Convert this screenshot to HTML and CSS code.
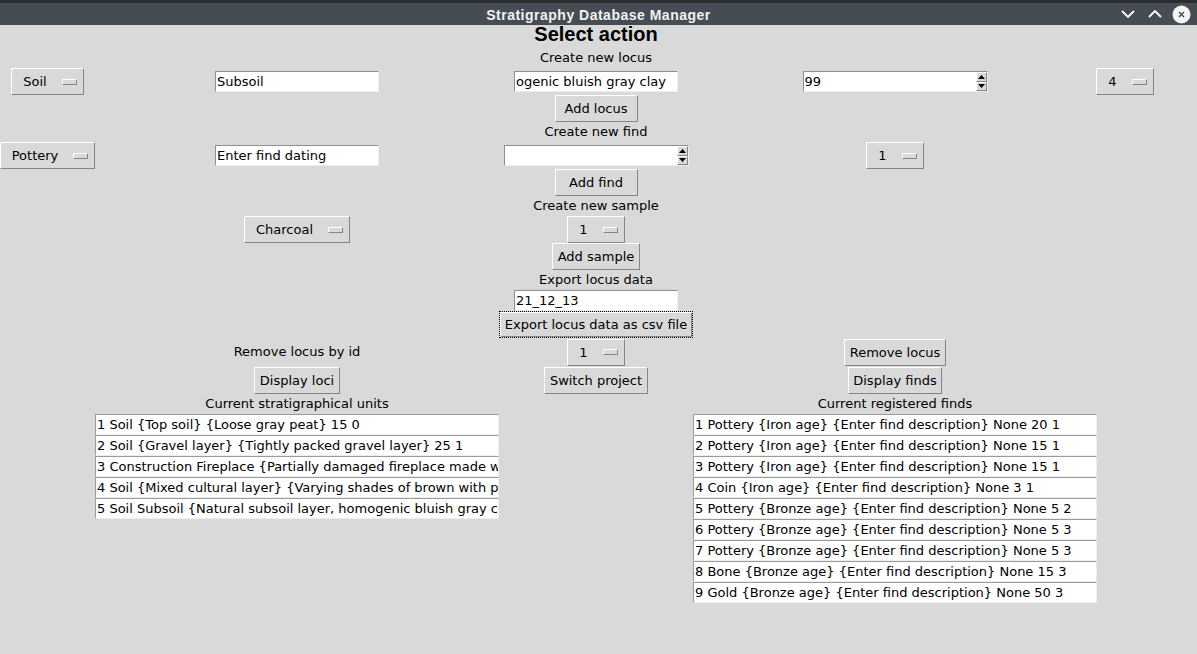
FILE: index.html
```html
<!DOCTYPE html>
<html lang="en">
<head>
<meta charset="utf-8">
<title>Stratigraphy Database Manager</title>
<link rel="stylesheet" href="styles.css">
</head>
<body>
<div class="window">
  <header class="titlebar">
    <span class="tb-side"></span>
    <span class="title">Stratigraphy Database Manager</span>
    <div class="controls">
      <span class="ctl"><svg width="14" height="8" viewBox="0 0 14 8"><path d="M1 1 L7 7 L13 1" fill="none" stroke="#ffffff" stroke-width="1.8"/></svg></span>
      <span class="ctl"><svg width="14" height="8" viewBox="0 0 14 8"><path d="M1 7 L7 1 L13 7" fill="none" stroke="#ffffff" stroke-width="1.8"/></svg></span>
      <span class="ctl"><svg width="19" height="19" viewBox="0 0 19 19"><circle cx="9.5" cy="9.5" r="9" fill="#f4f4f4"/><path d="M7 7 L12 12 M12 7 L7 12" stroke="#3c3f44" stroke-width="1.2"/></svg></span>
    </div>
  </header>

  <main class="app">
    <div class="heading r0 c2">Select action</div>

    <div class="label r1 c2">Create new locus</div>
    <div class="opt r2 c0">Soil<i class="ind"></i></div>
    <div class="entry r2 c1">Subsoil</div>
    <div class="entry r2 c2">ogenic bluish gray clay</div>
    <div class="spin r2 c3">
      <span class="spin-val">99</span>
      <span class="arrows">
        <span class="arrow"><svg width="7" height="4" viewBox="0 0 7 4"><polygon points="0,4 7,4 3.5,0" fill="#000"/></svg></span>
        <span class="arrow"><svg width="7" height="4" viewBox="0 0 7 4"><polygon points="0,0 7,0 3.5,4" fill="#000"/></svg></span>
      </span>
    </div>
    <div class="opt r2 c4">4<i class="ind"></i></div>
    <div class="btn btn-fixed r3 c2">Add locus</div>

    <div class="label r4 c2">Create new find</div>
    <div class="opt r5 c0">Pottery<i class="ind"></i></div>
    <div class="entry r5 c1">Enter find dating</div>
    <div class="spin r5 c2">
      <span class="spin-val"></span>
      <span class="arrows">
        <span class="arrow"><svg width="7" height="4" viewBox="0 0 7 4"><polygon points="0,4 7,4 3.5,0" fill="#000"/></svg></span>
        <span class="arrow"><svg width="7" height="4" viewBox="0 0 7 4"><polygon points="0,0 7,0 3.5,4" fill="#000"/></svg></span>
      </span>
    </div>
    <div class="opt r5 c3">1<i class="ind"></i></div>
    <div class="btn btn-fixed r6 c2">Add find</div>

    <div class="label r7 c2">Create new sample</div>
    <div class="opt r8 c1">Charcoal<i class="ind"></i></div>
    <div class="opt r8 c2">1<i class="ind"></i></div>
    <div class="btn r9 c2">Add sample</div>

    <div class="label r10 c2">Export locus data</div>
    <div class="entry r11 c2">21_12_13</div>
    <div class="btn btn-focus r12 c2">Export locus data as csv file</div>

    <div class="label r13 c1">Remove locus by id</div>
    <div class="opt r13 c2">1<i class="ind"></i></div>
    <div class="btn r13 c3">Remove locus</div>

    <div class="btn r14 c1">Display loci</div>
    <div class="btn r14 c2">Switch project</div>
    <div class="btn r14 c3">Display finds</div>

    <div class="label r15 c1">Current stratigraphical units</div>
    <div class="label r15 c3">Current registered finds</div>

    <div class="list r16 c1">
      <div class="list-row">1 Soil {Top soil} {Loose gray peat} 15 0</div>
      <div class="list-row">2 Soil {Gravel layer} {Tightly packed gravel layer} 25 1</div>
      <div class="list-row">3 Construction Fireplace {Partially damaged fireplace made w</div>
      <div class="list-row">4 Soil {Mixed cultural layer} {Varying shades of brown with p</div>
      <div class="list-row">5 Soil Subsoil {Natural subsoil layer, homogenic bluish gray c</div>
    </div>

    <div class="list r16 c3">
      <div class="list-row">1 Pottery {Iron age} {Enter find description} None 20 1</div>
      <div class="list-row">2 Pottery {Iron age} {Enter find description} None 15 1</div>
      <div class="list-row">3 Pottery {Iron age} {Enter find description} None 15 1</div>
      <div class="list-row">4 Coin {Iron age} {Enter find description} None 3 1</div>
      <div class="list-row">5 Pottery {Bronze age} {Enter find description} None 5 2</div>
      <div class="list-row">6 Pottery {Bronze age} {Enter find description} None 5 3</div>
      <div class="list-row">7 Pottery {Bronze age} {Enter find description} None 5 3</div>
      <div class="list-row">8 Bone {Bronze age} {Enter find description} None 15 3</div>
      <div class="list-row">9 Gold {Bronze age} {Enter find description} None 50 3</div>
    </div>
  </main>
</div>
</body>
</html>
```

FILE: styles.css
```css
* { box-sizing: border-box; }

body {
  margin: 0;
  background: #d9d9d9;
  font-family: "DejaVu Sans", sans-serif;
  font-size: 13px;
  color: #000;
}

.window {
  width: 1197px;
  height: 654px;
  overflow: hidden;
  background: #d9d9d9;
}

/* ---------- title bar ---------- */
.titlebar {
  height: 25px;
  border-top: 3px solid #2b2c2e;
  background: #454c54;
  display: grid;
  grid-template-columns: 1fr auto 1fr;
  align-items: center;
}

.title {
  font-family: "Liberation Sans", Arial, sans-serif;
  font-weight: bold;
  font-size: 14px;
  letter-spacing: 0.5px;
  color: #f2f2f2;
  padding-top: 1px;
}

.controls {
  justify-self: end;
  display: flex;
  align-items: center;
  height: 100%;
  padding-right: 2px;
}

.ctl {
  width: 27px;
  height: 22px;
  display: flex;
  align-items: center;
  justify-content: center;
}

/* ---------- main grid ---------- */
.app {
  display: grid;
  grid-template-columns: 95px 404px 194px 404px 56px;
  grid-template-rows: 23px 20px 27px 27px 20px 27px 27px 20px 27px 27px 20px 21px 27px 28px 28px 20px auto;
  place-items: center;
}

.r0 { grid-row: 1; }
.r1 { grid-row: 2; }
.r2 { grid-row: 3; }
.r3 { grid-row: 4; }
.r4 { grid-row: 5; }
.r5 { grid-row: 6; }
.r6 { grid-row: 7; }
.r7 { grid-row: 8; }
.r8 { grid-row: 9; }
.r9 { grid-row: 10; }
.r10 { grid-row: 11; }
.r11 { grid-row: 12; }
.r12 { grid-row: 13; }
.r13 { grid-row: 14; }
.r14 { grid-row: 15; }
.r15 { grid-row: 16; }
.r16 { grid-row: 17; }

.c0 { grid-column: 1; }
.c1 { grid-column: 2; }
.c2 { grid-column: 3; }
.c3 { grid-column: 4; }
.c4 { grid-column: 5; }

/* ---------- widgets ---------- */
.heading {
  font-family: "Liberation Sans", Arial, sans-serif;
  font-weight: bold;
  font-size: 20px;
  line-height: 19px;
  align-self: start;
  white-space: nowrap;
}

.label {
  line-height: 20px;
  white-space: nowrap;
}

.btn {
  height: 27px;
  padding: 0 4.5px;
  border: 1px solid;
  border-color: #ffffff #858585 #858585 #ffffff;
  background: #d9d9d9;
  line-height: 25px;
  white-space: nowrap;
}

.btn-fixed {
  width: 83px;
  text-align: center;
}

.btn-focus {
  border: 1px dotted #000;
  box-shadow: inset 1px 1px 0 #ffffff, inset -1px -1px 0 #858585;
  padding: 0 5px;
}

.opt {
  height: 27px;
  display: flex;
  align-items: center;
  padding: 0 6px 0 11px;
  border: 1px solid;
  border-color: #ffffff #858585 #858585 #ffffff;
  white-space: nowrap;
}

.c0.opt:first-child { margin-left: 0; }

.ind {
  display: block;
  width: 15px;
  height: 6px;
  margin-left: 15px;
  border: 1px solid;
  border-color: #ffffff #858585 #858585 #ffffff;
}

.entry {
  width: 164px;
  height: 21px;
  background: #ffffff;
  border: 1px solid;
  border-color: #8f8f8f #eeeeee #eeeeee #8f8f8f;
  padding: 0 1px;
  line-height: 19px;
  white-space: nowrap;
  overflow: hidden;
}

.spin {
  width: 185px;
  height: 21px;
  display: flex;
  background: #ffffff;
  border: 1px solid;
  border-color: #8f8f8f #eeeeee #eeeeee #8f8f8f;
}

.spin-val {
  flex: 1;
  padding-left: 1px;
  line-height: 19px;
  white-space: nowrap;
}

.arrows {
  width: 11px;
  display: flex;
  flex-direction: column;
}

.arrow {
  flex: 1;
  display: flex;
  align-items: center;
  justify-content: center;
  background: #d9d9d9;
  border: 1px solid;
  border-color: #ffffff #858585 #858585 #ffffff;
}

.arrow svg { display: block; }

.list {
  width: 404px;
  align-self: start;
  display: flex;
  flex-direction: column;
}

.list-row {
  height: 21px;
  background: #ffffff;
  border: 1px solid;
  border-color: #9a9a9a #eeeeee #eeeeee #9a9a9a;
  padding-left: 1px;
  line-height: 19px;
  white-space: nowrap;
  overflow: hidden;
}
```
